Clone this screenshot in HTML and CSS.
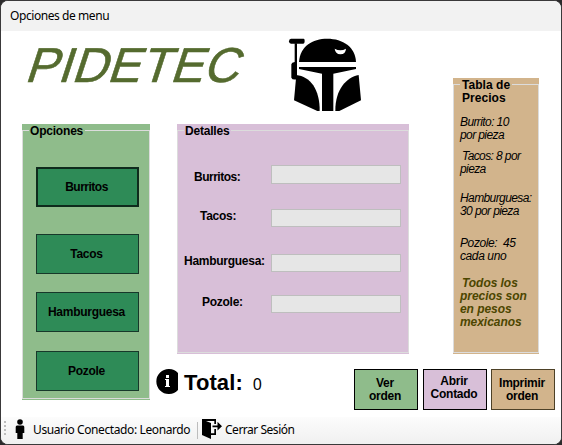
FILE: index.html
```html
<!DOCTYPE html>
<html lang="es">
<head>
<meta charset="utf-8">
<title>Opciones de menu</title>
<link rel="stylesheet" href="styles.css">
</head>
<body>
<div class="window">
  <header class="titlebar"><span>Opciones de menu</span></header>
  <main class="content">
    <div class="left">
      <div class="brand">
        <h1>PIDETEC</h1>
        <svg class="helmet" width="80" height="84" viewBox="0 0 240 252">
          <path d="M18 20H56Q59 20 59 27Q59 35 55 35H18Q12 35 12 28Q12 20 18 20Z"/>
          <path d="M29 34H36V142Q22 145 19 137V97Q20 91 29 90Z"/>
          <path d="M42 90C45 43 82 20 127 20C174 20 211 45 213 90Z"/>
          <path d="M42 105H213V111L145 125V237H111V125L42 111Z"/>
          <path d="M34 129C75 133 105 172 104 237H97L27 205Z"/>
          <path d="M221 129C185 135 150 173 151 237H163L228 205Z"/>
          <path class="glint" d="M149 50Q166 59 183 50Q182 67 166 67Q151 66 149 50Z"/>
        </svg>
      </div>
      <div class="panels">
        <section class="group options">
          <div class="frame"><h2>Opciones</h2>
            <button class="first tight">Burritos</button>
            <button>Tacos</button>
            <button>Hamburguesa</button>
            <button>Pozole</button>
          </div>
        </section>
        <div class="center">
          <section class="group details">
            <div class="frame"><h2>Detalles</h2>
              <div class="row r1"><label class="tight">Burritos:</label><input disabled></div>
              <div class="row r2"><label>Tacos:</label><input disabled></div>
              <div class="row r3"><label>Hamburguesa:</label><input disabled></div>
              <div class="row r4"><label>Pozole:</label><input disabled></div>
            </div>
          </section>
          <div class="total">
            <svg width="23" height="25" viewBox="0 0 23 25"><path d="M23 4A12.5 12.5 0 1 0 23 21Z"/><path class="glint" d="M11 6H14V9H11ZM10 10H14V17H15V18H10V17H11V11H10Z"/></svg>
            <strong>Total:</strong><span>0</span>
          </div>
        </div>
      </div>
    </div>
    <div class="right">
      <section class="group prices">
        <div class="frame"><h2>Tabla de<br>Precios</h2>
          <p class="p1">Burrito: 10<br>por pieza</p>
          <p class="p2"><span class="lead">Tacos: 8 por</span><br>pieza</p>
          <p class="p3">Hamburguesa:<br>30 por pieza</p>
          <p class="p4">Pozole:&nbsp; 45<br>cada uno</p>
          <p class="note"><span class="lead">Todos los</span><br>precios son<br>en pesos<br>mexicanos</p>
        </div>
      </section>
      <div class="actions">
        <button class="view">Ver<br>orden</button>
        <button class="open">Abrir<br>Contado</button>
        <button class="print">Imprimir<br>orden</button>
      </div>
    </div>
  </main>
  <footer class="toolbar">
    <svg class="grip" width="2" height="16" viewBox="0 0 2 16"><path d="M0 0h2v2H0zM0 4h2v2H0zM0 8h2v2H0zM0 12h2v2H0z"/></svg>
    <svg class="person" width="10" height="21" viewBox="0 0 10 21"><circle cx="5" cy="3" r="2.8"/><path d="M2 6.5H8Q9.3 6.5 9.3 8V14H7.7V20H2.3V14H.7V8Q.7 6.5 2 6.5Z"/></svg>
    <span class="user">Usuario Conectado: Leonardo</span>
    <i class="sep"></i>
    <svg class="door" width="20" height="20" viewBox="0 0 20 20"><path d="M0 0H14V5H12.3V2H4L9 4V20L0 16Z"/><path d="M9 14.2H12.3V10H14V16H9ZM10.5 6.5H15.5V2.8L20 7.2L15.5 11.5V8.2H10.5Z"/></svg>
    <span class="logout">Cerrar Sesión</span>
  </footer>
</div>
</body>
</html>
```
FILE: styles.css
```css
* { box-sizing: border-box; }
body {
  margin: 0;
  background: #2b2a2b;
  color: #000;
  font: 12px/13px "Liberation Sans", Arial, sans-serif;
}
.window {
  display: flex;
  flex-direction: column;
  width: 562px;
  height: 445px;
  border: 1px solid #3a393a;
  border-radius: 8px;
  background: #fff;
  overflow: hidden;
}
.titlebar {
  height: 30px;
  padding: 6px 0 0 9px;
  background: #f2f2f2;
  font: 12px/18px "Noto Sans", "Open Sans", sans-serif;
}
.titlebar span { letter-spacing: -.43px; }
h1, h2, p { margin: 0; font-size: 12px; }
button {
  display: block;
  padding: 0;
  font: bold 12px/13px "Liberation Sans", Arial, sans-serif;
  letter-spacing: -.27px;
  color: #000;
}
.content { display: flex; height: 386px; }
.left { width: 408px; flex: none; padding-left: 21px; }
.brand { display: flex; height: 93px; }
.brand h1 {
  width: 263px;
  padding: 6px 0 0 1px;
  font: 49px/56px "Liberation Sans", Arial, sans-serif;
  letter-spacing: .2px;
  color: #556b2f;
  -webkit-text-stroke: .6px #556b2f;
  transform: skewX(-18deg);
  transform-origin: 0 54px;
}
.helmet { margin-top: 1px; }
.glint { fill: #fff; }
.panels { display: flex; gap: 27px; }
.group { padding: 6px 0 1px; }
.frame {
  position: relative;
  height: 100%;
  border: 1px solid #dcdcdc;
}
.frame h2 {
  position: absolute;
  top: -6px;
  left: 6px;
  padding: 0 2px 0 1px;
  background: inherit;
  letter-spacing: -.2px;
  white-space: nowrap;
}
.options { width: 128px; height: 276px; background: #8fbc8b; }
.options .frame { padding: 36px 10px 0 13px; background: #8fbc8b; }
.options button {
  width: 103px;
  height: 40px;
  margin-bottom: 19px;
  padding-right: 2px;
  border: 1px solid #17382a;
  background: #2e8b57;
}
.options .first { border: 2px solid #0f2b1d; margin-bottom: 27px; }
.options button:nth-of-type(2) { margin-bottom: 18px; }
.tight { letter-spacing: -.5px !important; }
.center { width: 232px; flex: none; }
.details { height: 230px; background: #d8bfd8; }
.details .frame { padding-top: 34px; background: #d8bfd8; }
.row { display: flex; align-items: flex-start; height: 44px; }
.row label {
  width: 93px;
  font-weight: bold;
  letter-spacing: -.27px;
  white-space: nowrap;
}
.row input {
  width: 130px;
  height: 18px;
  padding: 0;
  border: 1px solid #bebebe;
  background: #e6e6e6;
}
.r1 input { height: 19px; }
.r1 label { padding: 6px 0 0 16px; }
.r2 label { padding: 1px 0 0 22px; }
.r3 label { padding: 1px 0 0 6px; }
.r4 label { padding: 1px 0 0 24px; }
.row.r2 { height: 45px; }
.row.r3 { height: 41px; }
.total { display: flex; height: 26px; margin: 15px 0 0 -22px; }
.total strong {
  margin-left: 6px;
  font: bold 22px/27px "Liberation Sans", Arial, sans-serif;
  letter-spacing: .1px;
}
.total span { margin-left: 10px; font: 16px/31px "Noto Sans", sans-serif; }
.right { width: 152px; flex: none; padding-top: 47px; }
.prices { width: 86px; height: 276px; margin-left: 44px; background: #d2b48c; }
.prices .frame { background: #d2b48c; padding: 0 0 0 6px; }
.prices h2 { padding-left: 2px; letter-spacing: .05px; }
.prices p { font-style: italic; letter-spacing: -.6px; white-space: nowrap; }
.prices .lead { margin-left: 2px; }
.prices .p1 { padding-top: 31px; }
.prices .p2 { padding-top: 8px; }
.prices .p3 { padding-top: 16px; }
.prices .p4 { padding-top: 19px; letter-spacing: -.4px; }
.prices .note { padding-top: 14px; font-weight: bold; letter-spacing: -.05px; color: #4c4600; }
.actions { display: flex; gap: 5px; margin: 15px 0 0 -55px; }
.actions button { width: 64px; height: 41px; padding-right: 2px; border: 1px solid #000; }
.actions .view { background: #8fbc8b; }
.actions .open { background: #d8bfd8; padding-bottom: 3px; }
.actions .print { background: #d2b48c; border-color: #4d4127; margin-left: -1px; }
.toolbar {
  display: flex;
  height: 27px;
  background: linear-gradient(#fcfcfc, #f0f0f0);
  font: 12px/25px "Noto Sans", "Open Sans", sans-serif;
  white-space: nowrap;
}
.grip { margin: 4px 0 0 3px; fill: #bdbdbd; }
.person { margin: 2px 0 0 9px; }
.user { width: 157px; margin-left: 8px; letter-spacing: -.39px; }
.sep { width: 1px; height: 17px; margin: 5px 0 0 7px; background: #bdbdbd; }
.door { margin: 2px 0 0 4px; }
.logout { margin-left: 3px; letter-spacing: -.48px; }
```
